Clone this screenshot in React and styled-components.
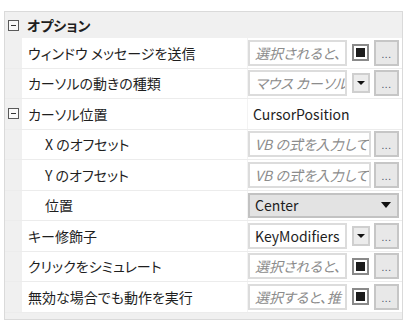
import React from 'react';
import styled, { createGlobalStyle } from 'styled-components';

const GlobalStyle = createGlobalStyle`
  html, body {
    margin: 0;
    padding: 0;
    background: #ffffff;
  }
  body {
    font-family: "Noto Sans CJK JP", "Noto Sans", sans-serif;
    font-size: 14px;
    color: #1e1e1e;
    font-feature-settings: "palt";
  }
`;

// hints are only the part the narrow boxes show
const rows = [
  { label: 'ウィンドウ メッセージを送信', kind: 'text', hint: '選択されると、', extra: 'check' },
  { label: 'カーソルの動きの種類', kind: 'text', hint: 'マウス カーソル', extra: 'drop' },
  { label: 'カーソル位置', kind: 'category', value: 'CursorPosition' },
  { label: 'X のオフセット', kind: 'wide', hint: 'VB の式を入力して', sub: true },
  { label: 'Y のオフセット', kind: 'wide', hint: 'VB の式を入力して', sub: true },
  { label: '位置', kind: 'combo', value: 'Center', sub: true },
  { label: 'キー修飾子', kind: 'value', value: 'KeyModifiers', extra: 'drop' },
  { label: 'クリックをシミュレート', kind: 'text', hint: '選択されると、', extra: 'check' },
  { label: '無効な場合でも動作を実行', kind: 'text', hint: '選択すると、推', extra: 'check' },
];

const App = () => {
  return (
    <>
      <GlobalStyle />
      <Page>
        <Grid>
          <Header>
            <Gutter><Toggle /></Gutter>
            <HeaderTitle>オプション</HeaderTitle>
          </Header>
          {rows.map((r) => (
            <Row key={r.label}>
              <Gutter>{r.kind === 'category' && <Toggle />}</Gutter>
              <Label sub={r.sub}>{r.label}</Label>
              <Value>
                {r.kind === 'category' && <Plain>{r.value}</Plain>}
                {r.kind === 'combo' && (
                  <Combo>
                    <span>{r.value}</span>
                    <Arrow big />
                  </Combo>
                )}
                {(r.kind === 'text' || r.kind === 'wide' || r.kind === 'value') && (
                  <>
                    <TextBox wide={r.kind === 'wide'}>
                      {r.kind === 'value' ? <span>{r.value}</span> : <Hint>{r.hint}</Hint>}
                    </TextBox>
                    {r.extra === 'check' && (
                      <Check><CheckFill /></Check>
                    )}
                    {r.extra === 'drop' && (
                      <DropBtn><Arrow /></DropBtn>
                    )}
                    <DotsBtn>...</DotsBtn>
                  </>
                )}
              </Value>
            </Row>
          ))}
          <Filler />
        </Grid>
      </Page>
    </>
  );
};

export default App;

const Page = styled.div`
  padding: 11px 4px 0 4px;
  width: 407px;
  height: 324px;
  box-sizing: border-box;
`;

const Grid = styled.div`
  width: 399px;
  height: 309px;
  box-sizing: border-box;
  border: 1px solid #dadada;
  background: #f0f0f0;
  display: flex;
  flex-direction: column;
`;

const Header = styled.div`
  display: grid;
  grid-template-columns: 17px 1fr;
  height: 26px;
  align-items: center;
  background: #f0f0f0;
`;

const Gutter = styled.div`
  display: flex;
  align-items: center;
  justify-content: center;
  height: 100%;
  background: #f0f0f0;
`;

const Toggle = styled.div`
  width: 11px;
  height: 11px;
  box-sizing: border-box;
  border: 1px solid #5a5a5a;
  background: #fafafa;
  position: relative;
  &::after {
    content: '';
    position: absolute;
    left: 2px;
    right: 2px;
    top: 4px;
    height: 1px;
    background: #333;
  }
`;

const HeaderTitle = styled.div`
  font-weight: 700;
  padding-left: 5px;
  line-height: 26px;
`;

const Row = styled.div`
  display: grid;
  grid-template-columns: 17px 226px 1fr;
  height: 30.5px;
  box-sizing: border-box;
  border-bottom: 1px solid #ececec;
  background: #ffffff;
`;

const Label = styled.div`
  display: flex;
  align-items: center;
  padding-left: ${(p) => (p.sub ? '23px' : '6px')};
  white-space: nowrap;
  overflow: hidden;
  border-right: 1px solid #f3f3f3;
`;

const Value = styled.div`
  display: flex;
  align-items: center;
  padding-left: 0;
  padding-right: 3px;
  min-width: 0;
`;

const Plain = styled.div`
  padding-left: 5px;
`;

const TextBox = styled.div`
  width: ${(p) => (p.wide ? '123px' : '99px')};
  height: 26px;
  box-sizing: border-box;
  border: 2px solid #dcdcdc;
  background: #ffffff;
  padding-left: 5px;
  display: flex;
  align-items: center;
  white-space: nowrap;
  overflow: hidden;
  flex-shrink: 0;
`;

const Hint = styled.span`
  font-style: italic;
  color: #8c8c8c;
`;

const Check = styled.div`
  width: 17px;
  height: 17px;
  margin-left: 5px;
  box-sizing: border-box;
  border: 2px solid #8a8a8a;
  padding: 2px;
  background: #ffffff;
  flex-shrink: 0;
`;

const CheckFill = styled.div`
  width: 100%;
  height: 100%;
  background: #1c1c1c;
`;

const DropBtn = styled.div`
  width: 18px;
  height: 20px;
  margin-left: 5px;
  margin-right: -1px;
  box-sizing: border-box;
  border: 2px solid #cfcfcf;
  background: #ececec;
  display: flex;
  align-items: center;
  justify-content: center;
  flex-shrink: 0;
`;

const Arrow = styled.div`
  width: 0;
  height: 0;
  border-left: ${(p) => (p.big ? '5px' : '4px')} solid transparent;
  border-right: ${(p) => (p.big ? '5px' : '4px')} solid transparent;
  border-top: ${(p) => (p.big ? '6px' : '4px')} solid #111;
`;

const DotsBtn = styled.div`
  width: 25px;
  height: 26px;
  margin-left: auto;
  box-sizing: border-box;
  border: 2px solid #c6c6c6;
  background: #e8e8e8;
  color: #3e4a5e;
  font-family: "Liberation Sans", sans-serif;
  font-size: 10px;
  line-height: 10px;
  letter-spacing: 0.5px;
  display: flex;
  align-items: flex-end;
  justify-content: center;
  padding-bottom: 4px;
  flex-shrink: 0;
`;

const Combo = styled.div`
  width: 151px;
  height: 25px;
  box-sizing: border-box;
  border: 2px solid #c2c2c2;
  background: #e3e3e3;
  display: flex;
  align-items: center;
  justify-content: space-between;
  padding: 0 6px 0 5px;
`;

const Filler = styled.div`
  flex: 1;
  background: #f0f0f0;
`;
